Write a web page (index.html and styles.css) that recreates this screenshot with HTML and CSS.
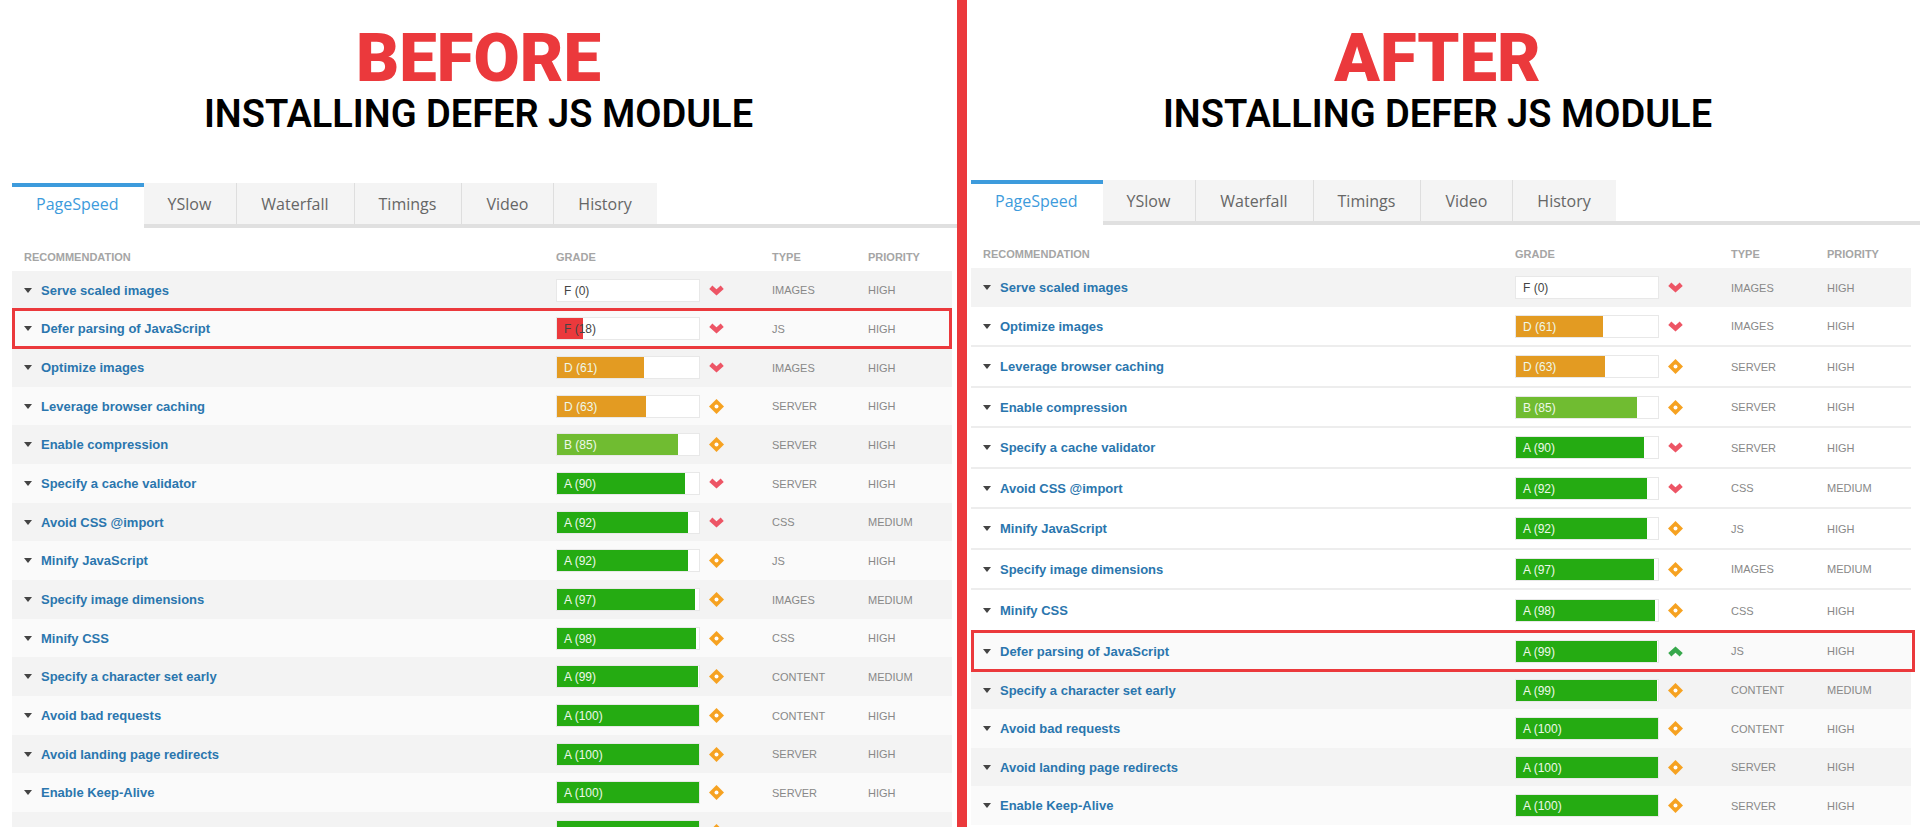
FILE: index.html
```html
<!DOCTYPE html>
<html lang="en">
<head>
    <meta charset="UTF-8">
    <meta name="viewport" content="width=device-width, initial-scale=1.0">
    <title>Defer JS Module - Before and After</title>
    <link rel="stylesheet" href="styles.css">
</head>
<body>

    <!-- Trend icons -->
    <svg class="icon-defs" aria-hidden="true">
        <symbol id="down" viewBox="0 0 15 11"><path d="M1.8 2.2 L7.5 7.4 L13.2 2.2" fill="none" stroke="#ed5565" stroke-width="4.6"/></symbol>
        <symbol id="up" viewBox="0 0 15 11"><path d="M1.8 8.8 L7.5 3.6 L13.2 8.8" fill="none" stroke="#37a84c" stroke-width="4.6"/></symbol>
        <symbol id="same" viewBox="0 0 15 15"><path d="M7.5 0 L15 7.5 L7.5 15 L0 7.5 Z" fill="#f6a221"/><circle cx="7.5" cy="7.5" r="2" fill="#fff"/></symbol>
    </svg>

    <main class="compare">

        <!-- Before -->
        <section class="panel before">
            <header class="title">
                <h1>BEFORE</h1>
                <h2>INSTALLING DEFER JS MODULE</h2>
            </header>
            <nav class="tabs">
                <a href="#" class="active">PageSpeed</a>
                <a href="#">YSlow</a>
                <a href="#">Waterfall</a>
                <a href="#">Timings</a>
                <a href="#">Video</a>
                <a href="#">History</a>
            </nav>
            <table class="report">
                <thead>
                    <tr><th class="name">Recommendation</th><th class="grade">Grade</th><th class="type">Type</th><th class="priority">Priority</th></tr>
                </thead>
                <tbody>
                    <tr><td><a href="#">Serve scaled images</a></td><td><div class="score"><div class="bar f"><i style="width:0%"></i><span>F (0)</span></div><svg class="arrow"><use href="#down"/></svg></div></td><td>Images</td><td>High</td></tr>
                    <tr class="highlight"><td><a href="#">Defer parsing of JavaScript</a></td><td><div class="score"><div class="bar f"><i style="width:18%"></i><span>F (18)</span></div><svg class="arrow"><use href="#down"/></svg></div></td><td>JS</td><td>High</td></tr>
                    <tr><td><a href="#">Optimize images</a></td><td><div class="score"><div class="bar d"><i style="width:61%"></i><span>D (61)</span></div><svg class="arrow"><use href="#down"/></svg></div></td><td>Images</td><td>High</td></tr>
                    <tr><td><a href="#">Leverage browser caching</a></td><td><div class="score"><div class="bar d"><i style="width:63%"></i><span>D (63)</span></div><svg class="diamond"><use href="#same"/></svg></div></td><td>Server</td><td>High</td></tr>
                    <tr><td><a href="#">Enable compression</a></td><td><div class="score"><div class="bar b"><i style="width:85%"></i><span>B (85)</span></div><svg class="diamond"><use href="#same"/></svg></div></td><td>Server</td><td>High</td></tr>
                    <tr><td><a href="#">Specify a cache validator</a></td><td><div class="score"><div class="bar a"><i style="width:90%"></i><span>A (90)</span></div><svg class="arrow"><use href="#down"/></svg></div></td><td>Server</td><td>High</td></tr>
                    <tr><td><a href="#">Avoid CSS @import</a></td><td><div class="score"><div class="bar a"><i style="width:92%"></i><span>A (92)</span></div><svg class="arrow"><use href="#down"/></svg></div></td><td>CSS</td><td>Medium</td></tr>
                    <tr><td><a href="#">Minify JavaScript</a></td><td><div class="score"><div class="bar a"><i style="width:92%"></i><span>A (92)</span></div><svg class="diamond"><use href="#same"/></svg></div></td><td>JS</td><td>High</td></tr>
                    <tr><td><a href="#">Specify image dimensions</a></td><td><div class="score"><div class="bar a"><i style="width:97%"></i><span>A (97)</span></div><svg class="diamond"><use href="#same"/></svg></div></td><td>Images</td><td>Medium</td></tr>
                    <tr><td><a href="#">Minify CSS</a></td><td><div class="score"><div class="bar a"><i style="width:98%"></i><span>A (98)</span></div><svg class="diamond"><use href="#same"/></svg></div></td><td>CSS</td><td>High</td></tr>
                    <tr><td><a href="#">Specify a character set early</a></td><td><div class="score"><div class="bar a"><i style="width:99%"></i><span>A (99)</span></div><svg class="diamond"><use href="#same"/></svg></div></td><td>Content</td><td>Medium</td></tr>
                    <tr><td><a href="#">Avoid bad requests</a></td><td><div class="score"><div class="bar a"><i style="width:100%"></i><span>A (100)</span></div><svg class="diamond"><use href="#same"/></svg></div></td><td>Content</td><td>High</td></tr>
                    <tr><td><a href="#">Avoid landing page redirects</a></td><td><div class="score"><div class="bar a"><i style="width:100%"></i><span>A (100)</span></div><svg class="diamond"><use href="#same"/></svg></div></td><td>Server</td><td>High</td></tr>
                    <tr><td><a href="#">Enable Keep-Alive</a></td><td><div class="score"><div class="bar a"><i style="width:100%"></i><span>A (100)</span></div><svg class="diamond"><use href="#same"/></svg></div></td><td>Server</td><td>High</td></tr>
                    <tr><td></td><td><div class="score"><div class="bar a"><i style="width:100%"></i></div><svg class="diamond"><use href="#same"/></svg></div></td><td></td><td></td></tr>
                </tbody>
            </table>
        </section>

        <!-- After -->
        <section class="panel after">
            <header class="title">
                <h1>AFTER</h1>
                <h2>INSTALLING DEFER JS MODULE</h2>
            </header>
            <nav class="tabs">
                <a href="#" class="active">PageSpeed</a>
                <a href="#">YSlow</a>
                <a href="#">Waterfall</a>
                <a href="#">Timings</a>
                <a href="#">Video</a>
                <a href="#">History</a>
            </nav>
            <table class="report">
                <thead>
                    <tr><th class="name">Recommendation</th><th class="grade">Grade</th><th class="type">Type</th><th class="priority">Priority</th></tr>
                </thead>
                <tbody>
                    <tr><td><a href="#">Serve scaled images</a></td><td><div class="score"><div class="bar f"><i style="width:0%"></i><span>F (0)</span></div><svg class="arrow"><use href="#down"/></svg></div></td><td>Images</td><td>High</td></tr>
                </tbody>
                <tbody class="lined">
                    <tr><td><a href="#">Optimize images</a></td><td><div class="score"><div class="bar d"><i style="width:61%"></i><span>D (61)</span></div><svg class="arrow"><use href="#down"/></svg></div></td><td>Images</td><td>High</td></tr>
                    <tr><td><a href="#">Leverage browser caching</a></td><td><div class="score"><div class="bar d"><i style="width:63%"></i><span>D (63)</span></div><svg class="diamond"><use href="#same"/></svg></div></td><td>Server</td><td>High</td></tr>
                    <tr><td><a href="#">Enable compression</a></td><td><div class="score"><div class="bar b"><i style="width:85%"></i><span>B (85)</span></div><svg class="diamond"><use href="#same"/></svg></div></td><td>Server</td><td>High</td></tr>
                    <tr><td><a href="#">Specify a cache validator</a></td><td><div class="score"><div class="bar a"><i style="width:90%"></i><span>A (90)</span></div><svg class="arrow"><use href="#down"/></svg></div></td><td>Server</td><td>High</td></tr>
                    <tr><td><a href="#">Avoid CSS @import</a></td><td><div class="score"><div class="bar a"><i style="width:92%"></i><span>A (92)</span></div><svg class="arrow"><use href="#down"/></svg></div></td><td>CSS</td><td>Medium</td></tr>
                    <tr><td><a href="#">Minify JavaScript</a></td><td><div class="score"><div class="bar a"><i style="width:92%"></i><span>A (92)</span></div><svg class="diamond"><use href="#same"/></svg></div></td><td>JS</td><td>High</td></tr>
                    <tr><td><a href="#">Specify image dimensions</a></td><td><div class="score"><div class="bar a"><i style="width:97%"></i><span>A (97)</span></div><svg class="diamond"><use href="#same"/></svg></div></td><td>Images</td><td>Medium</td></tr>
                    <tr><td><a href="#">Minify CSS</a></td><td><div class="score"><div class="bar a"><i style="width:98%"></i><span>A (98)</span></div><svg class="diamond"><use href="#same"/></svg></div></td><td>CSS</td><td>High</td></tr>
                </tbody>
                <tbody class="rest">
                    <tr class="highlight"><td><a href="#">Defer parsing of JavaScript</a></td><td><div class="score"><div class="bar a"><i style="width:99%"></i><span>A (99)</span></div><svg class="arrow"><use href="#up"/></svg></div></td><td>JS</td><td>High</td></tr>
                    <tr><td><a href="#">Specify a character set early</a></td><td><div class="score"><div class="bar a"><i style="width:99%"></i><span>A (99)</span></div><svg class="diamond"><use href="#same"/></svg></div></td><td>Content</td><td>Medium</td></tr>
                    <tr><td><a href="#">Avoid bad requests</a></td><td><div class="score"><div class="bar a"><i style="width:100%"></i><span>A (100)</span></div><svg class="diamond"><use href="#same"/></svg></div></td><td>Content</td><td>High</td></tr>
                    <tr><td><a href="#">Avoid landing page redirects</a></td><td><div class="score"><div class="bar a"><i style="width:100%"></i><span>A (100)</span></div><svg class="diamond"><use href="#same"/></svg></div></td><td>Server</td><td>High</td></tr>
                    <tr><td><a href="#">Enable Keep-Alive</a></td><td><div class="score"><div class="bar a"><i style="width:100%"></i><span>A (100)</span></div><svg class="diamond"><use href="#same"/></svg></div></td><td>Server</td><td>High</td></tr>
                </tbody>
            </table>
        </section>

    </main>

</body>
</html>
```
FILE: styles.css
```css
/* General Styling */
* {
    box-sizing: border-box;
}
body {
    margin: 0;
    background: white;
    font-family: "Liberation Sans", Arial, sans-serif;
}
a {
    text-decoration: none;
}
.icon-defs {
    display: none;
}
.compare {
    display: flex;
    height: 100vh;
    overflow: hidden;
}
.panel {
    flex: 1;
    min-width: 0;
}
.before {
    padding-left: 12px;
    border-right: 10px solid #eb393c;
    flex: 0 0 auto;
    width: calc(50% + 7px);
}
.after {
    padding-left: 4px;
}
/* Title */
.title {
    height: 183px;
    padding-top: 19px;
    padding-right: 12px;
    text-align: center;
    font-family: Roboto, sans-serif;
}
.after .title {
    height: 180px;
    padding-right: 16px;
}
h1 {
    margin: 0;
    font-size: 67px;
    line-height: 78px;
    font-weight: 900;
    color: #eb393c;
}
h2 {
    margin: 0;
    font-size: 38px;
    line-height: 34px;
    font-weight: 600;
    color: black;
}
/* Tabs */
.tabs {
    display: flex;
    height: 45px;
    background: linear-gradient(#e0e0e0, #e0e0e0) bottom / 100% 4px no-repeat;
    font-family: "Open Sans", "Noto Sans", sans-serif;
    font-size: 16px;
    line-height: 43px;
}
.tabs a {
    height: 41px;
    padding: 0 25px 0 24px;
    background: #f4f4f4;
    border-right: 1px solid #dedede;
    color: #666;
}
.tabs a:last-child {
    border-right: none;
}
.tabs .active {
    height: 45px;
    background: white;
    border-top: 4px solid #3d9bdc;
    border-right: none;
    line-height: 35px;
    color: #3d9bdc;
}
/* Report Table */
.report {
    width: calc(100% - 5px);
    table-layout: fixed;
    border-spacing: 0;
    font-size: 11px;
    color: #888;
    text-transform: uppercase;
}
.after .report {
    width: calc(100% - 9px);
}
th {
    height: 43px;
    padding: 14px 0 0;
    text-align: left;
    color: #a5a5a5;
}
.name {
    padding-left: 12px;
}
.grade {
    width: 216px;
}
.type {
    width: 96px;
}
.priority {
    width: 84px;
}
td {
    height: 39px;
    padding: 0;
}
.before tr:nth-child(3n+1) td {
    height: 38px;
}
tbody tr {
    background: #fafafa;
}
tbody tr:nth-child(odd) {
    background: #f3f3f3;
}
td a {
    display: flex;
    align-items: center;
    gap: 9px;
    padding-left: 12px;
    font-size: 13px;
    font-weight: bold;
    color: #2a76ae;
    text-transform: none;
}
td a::before {
    content: "";
    border: 4px solid transparent;
    border-top: 5px solid #444;
    border-bottom: none;
}
/* Rows split by a thin line */
.lined tr,
.lined tr:nth-child(odd) {
    background: white;
}
.lined tr td {
    height: 41px;
    border-bottom: 2px solid #ededed;
}
.lined tr:nth-child(odd) td {
    height: 40px;
}
.lined tr:last-child td {
    border-bottom: none;
}
.rest tr {
    background: #f3f3f3;
}
.rest tr:nth-child(odd) {
    background: #fafafa;
}
.rest tr:nth-child(even) td {
    height: 38px;
}
.rest .highlight td {
    height: 40px;
}
/* Grade */
.score {
    display: flex;
    align-items: center;
    gap: 9px;
}
.bar {
    position: relative;
    width: 144px;
    height: 23px;
    border: 1px solid #e8e8e8;
    background: white;
    font-size: 12px;
    line-height: 22px;
    color: #eef8ea;
}
.bar i {
    display: block;
    height: 100%;
}
.bar span {
    position: absolute;
    top: 0;
    left: 7px;
}
.bar.f {
    color: #444;
}
.f i {
    background: #eb393c;
}
.d i {
    background: #e39b22;
}
.b i {
    background: #70bc31;
}
.a i {
    background: #25ab12;
}
.arrow {
    width: 15px;
    height: 11px;
}
.diamond {
    width: 15px;
    height: 15px;
}
/* Highlighted row */
.highlight {
    position: relative;
}
.highlight td:first-child::after {
    content: "";
    position: absolute;
    inset: -1px 0;
    border: 3px solid #eb393c;
    pointer-events: none;
}
.after .highlight td:first-child::after {
    right: -4px;
}
```
